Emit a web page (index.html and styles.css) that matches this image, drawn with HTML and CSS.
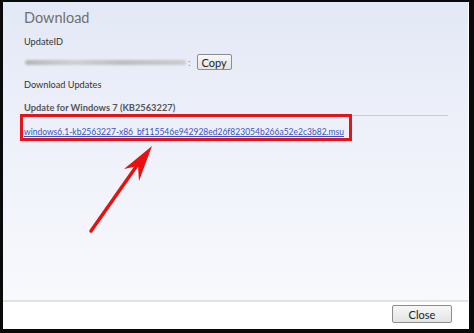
FILE: index.html
```html
<!DOCTYPE html>
<html>
<head>
<meta charset="utf-8">
<link rel="stylesheet" href="styles.css">
</head>
<body>
<div class="frame">
  <div class="dialog">
    <div class="main">
      <h1 class="title">Download</h1>
      <div class="label uid">UpdateID</div>
      <div class="idrow">
        <span class="blur"></span><span class="colon">:</span>
        <button class="btn copy">Copy</button>
      </div>
      <div class="label dl">Download Updates</div>
      <div class="section">Update for Windows 7 (KB2563227)</div>
      <div class="linkrow"><a class="link" href="#">windows6.1-kb2563227-x86_bf115546e942928ed26f823054b266a52e2c3b82.msu</a><div class="redbox"></div></div>
      <svg class="arrow" width="474" height="333" viewBox="0 0 474 333">
        <line x1="91" y1="231" x2="138" y2="164" stroke="#e81010" stroke-width="3.5" stroke-linecap="round"/>
        <polygon points="152,146 124,169 138,166 139,181" fill="#e81010"/>
      </svg>
    </div>
    <div class="footer">
      <button class="btn close">Close</button>
    </div>
  </div>
</div>
</body>
</html>
```
FILE: styles.css
```css
html, body { margin: 0; padding: 0; background: #000; }
body { font-family: Lato, "Noto Sans", sans-serif; }
.frame {
  width: 474px; height: 333px; box-sizing: border-box;
  border-style: solid; border-color: #0a0a0a;
  border-width: 2px 5px 4px 3px;
}
.dialog {
  height: 100%; display: flex; flex-direction: column;
  border-right: 1px solid #fff; box-sizing: border-box;
  background: #fff;
}
.main {
  flex: 1; position: relative;
  background: linear-gradient(#e3e8f6 0%, #edf0f9 40%, #f8f9fd 100%);
  padding: 7px 14px 0 21px;
  border-bottom: 2px solid #e2e2e4;
}
.title {
  margin: 0; font-weight: normal; font-size: 14.5px; line-height: 18px;
  color: #6f6f6f;
}
.label { font-size: 9.2px; line-height: 14px; color: #333; }
.uid { margin-top: 8px; }
.idrow { display: flex; align-items: center; margin-top: 5px; height: 16px; }
.blur {
  width: 161px; height: 5px; border-radius: 3px;
  background: linear-gradient(90deg, #b5b5b5, #cfcfcf 30%, #bdbdbd 60%, #cacaca);
  filter: blur(1px); margin-left: 1px;
}
.colon { font-size: 10px; color: #888; margin-left: 2px; }
.btn {
  font-family: inherit; font-size: 11px; color: #222;
  border: 1px solid #8d8d8d; border-radius: 2px;
  background: linear-gradient(#f7f7f7, #e4e4e4);
  padding: 0; box-sizing: border-box;
}
.copy { width: 35px; height: 16px; line-height: 13px; margin-left: 6px; font-size: 11px; }
.dl { margin-top: 8px; }
.section {
  font-size: 9.3px; font-weight: bold; color: #555; margin-top: 9px; line-height: 14px;
}
.linkrow {
  position: relative;
  border-top: 1px solid #c8cbd2; margin: 0 6px 0 -4px; padding: 3px 0 0 4px;
  height: 26px; box-sizing: border-box;
}
.link { font-size: 8.5px; line-height: 12px; color: #3a52c6; text-decoration: underline; display: inline-block; }
.redbox {
  position: absolute; left: 0; top: -2px; width: 332px; height: 27px;
  border: 3px solid #e4141c; box-sizing: border-box;
}
.arrow { position: absolute; left: -3px; top: -2px; pointer-events: none; }
.footer {
  height: 27px; display: flex; justify-content: flex-end; align-items: center;
  padding: 0 16px 3px 0; box-sizing: border-box; background: #fff;
}
.close { width: 60px; height: 18px; font-size: 11px; }
```
